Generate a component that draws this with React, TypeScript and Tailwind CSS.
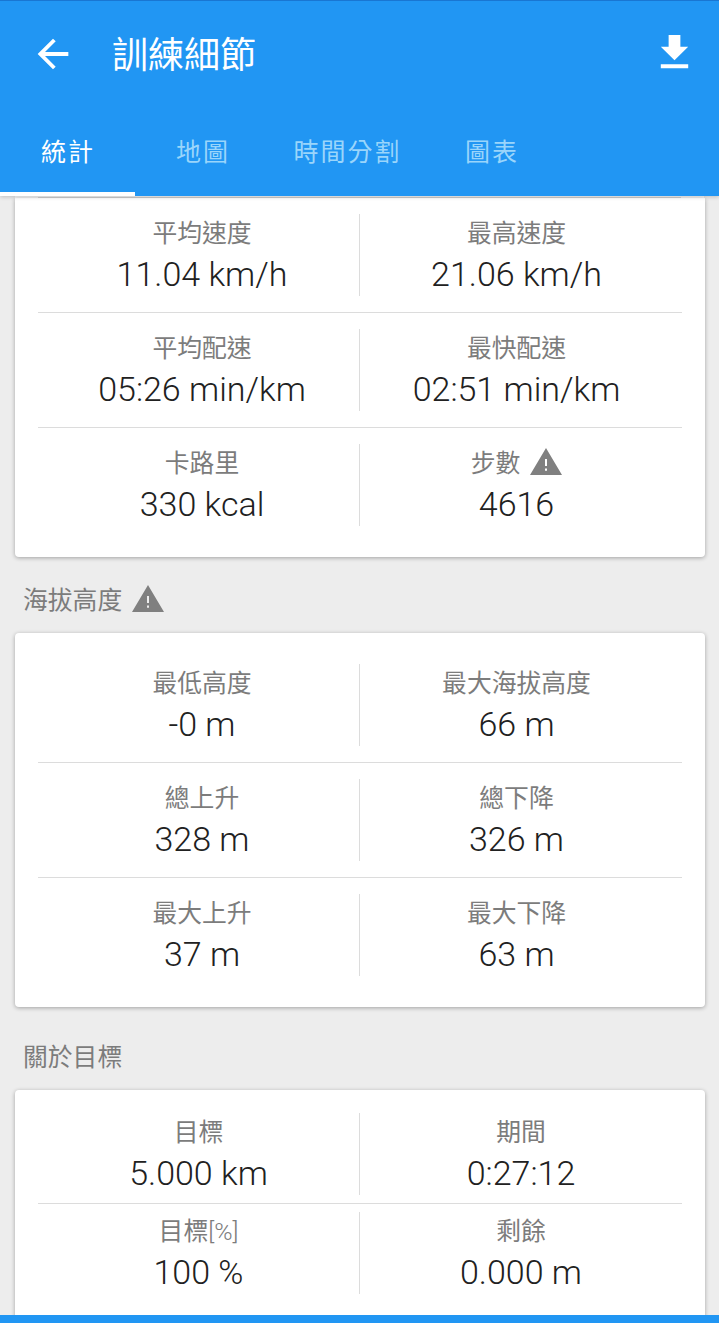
import React from 'react';
import { MdArrowBack, MdFileDownload } from 'react-icons/md';

interface Stat {
  label: string;
  unit?: string;
  value: string;
  warning?: boolean;
}

interface StatCardProps {
  rows: Stat[][];
  className?: string;
  compact?: boolean;
}

const speedRows: Stat[][] = [
  [
    { label: '平均速度', value: '11.04 km/h' },
    { label: '最高速度', value: '21.06 km/h' }
  ],
  [
    { label: '平均配速', value: '05:26 min/km' },
    { label: '最快配速', value: '02:51 min/km' }
  ],
  [
    { label: '卡路里', value: '330 kcal' },
    { label: '步數', value: '4616', warning: true }
  ]
];

const elevationRows: Stat[][] = [
  [
    { label: '最低高度', value: '-0 m' },
    { label: '最大海拔高度', value: '66 m' }
  ],
  [
    { label: '總上升', value: '328 m' },
    { label: '總下降', value: '326 m' }
  ],
  [
    { label: '最大上升', value: '37 m' },
    { label: '最大下降', value: '63 m' }
  ]
];

const goalRows: Stat[][] = [
  [
    { label: '目標', value: '5.000 km' },
    { label: '期間', value: '0:27:12' }
  ],
  [
    { label: '目標', unit: '[%]', value: '100 %' },
    { label: '剩餘', value: '0.000 m' }
  ]
];

const tabs = [
  { label: '統計', width: 'w-[135px]' },
  { label: '地圖', width: 'w-[135px]' },
  { label: '時間分割', width: 'w-[154px]' },
  { label: '圖表', width: 'w-[135px]' }
];

const WarningIcon: React.FC = () => (
  <svg className="w-8 h-[27px] shrink-0" viewBox="0 0 32 27" fill="#808080">
    <path fillRule="evenodd" d="M16 0L32 27H0L16 0zM15 11v7h2v-7h-2zM15 20.5v2.3h2v-2.3h-2z" />
  </svg>
);

const StatCell: React.FC<{ stat: Stat; className: string }> = ({ stat, className }) => (
  <div className={`flex h-[82px] w-[322px] flex-col items-center whitespace-nowrap pt-px ${className}`}>
    <div className="flex h-[37px] items-center text-[24.8px] leading-[37px] text-[#7c7c7c]">
      <span className="font-normal">{stat.label}</span>
      {stat.unit && <span className="font-light">{stat.unit}</span>}
      {stat.warning && (
        <span className="-mt-1 ml-2.5">
          <WarningIcon />
        </span>
      )}
    </div>
    <div className="h-[44px] text-[34px] leading-[45px] font-light text-[#212121]">{stat.value}</div>
  </div>
);

const StatCard: React.FC<StatCardProps> = ({ rows, className = '', compact = false }) => (
  <section className={`mx-[15px] w-[690px] shrink-0 rounded bg-white px-[23px] shadow-[0_1px_4px_rgba(0,0,0,0.32)] ${className}`}>
    {rows.map(([left, right], index) => (
      <div
        key={left.value}
        className={`flex ${compact ? 'py-2' : 'py-4'} ${index > 0 ? 'border-t border-[#dcdcdc]' : ''}`}
      >
        <StatCell stat={left} className={`border-r border-[#dcdcdc] ${compact ? '' : 'pl-[7px]'}`} />
        <StatCell stat={right} className={compact ? '' : 'pr-[9px]'} />
      </div>
    ))}
  </section>
);

export default function App() {
  return (
    <div
      lang="zh-Hant"
      className="flex h-[1323px] w-[719px] flex-col overflow-hidden bg-[#ededed] font-['Roboto','Noto_Sans_CJK_TC',sans-serif]"
    >
      <header className="relative z-10 flex h-[196px] shrink-0 flex-col border-t border-[#1976d2] bg-[#2196f3] text-white shadow-[0_1px_4px_rgba(0,0,0,0.2)]">
        <div className="flex h-[105px] items-center pr-[21px] pl-[30px]">
          <MdArrowBack className="size-[46px]" />
          <h1 className="mt-1 ml-9 flex-1 text-[36px]">訓練細節</h1>
          <MdFileDownload className="-mt-0.5 size-[47px]" />
        </div>
        <nav className="flex h-[90px] tracking-[2px]">
          {tabs.map((tab, index) => (
            <div
              key={tab.label}
              className={`flex justify-center border-b-4 pt-7 pl-px text-[25px] leading-[38px] ${tab.width} ${
                index === 0 ? 'border-white' : 'border-transparent text-[#9ad5fb]'
              }`}
            >
              {tab.label}
            </div>
          ))}
        </nav>
      </header>

      <main className="flex h-[1119px] shrink-0 flex-col overflow-hidden">
        {/* the card is scrolled, so only the divider above this row is left */}
        <div className="mx-[15px] shrink-0 bg-white px-[23px] pt-px">
          <div className="h-px bg-[#dcdcdc]" />
        </div>
        <StatCard rows={speedRows} className="rounded-t-none pb-[15px]" />

        <h2 className="flex h-[76px] shrink-0 items-center pt-2.5 pl-[23px] text-[24.8px] text-[#7c7c7c]">
          <span className="pt-px">海拔高度</span>
          <span className="-mt-[3px] ml-2.5">
            <WarningIcon />
          </span>
        </h2>
        <StatCard rows={elevationRows} className="py-[15px]" />

        <h2 className="flex h-[83px] shrink-0 items-center pt-[18px] pl-[23px] text-[24.8px] text-[#7c7c7c]">
          關於目標
        </h2>
        <StatCard rows={goalRows} compact className="h-[240px] pt-[15px]" />
      </main>

      <footer className="z-10 h-2 shrink-0 bg-[#2196f3]" />
    </div>
  );
}
